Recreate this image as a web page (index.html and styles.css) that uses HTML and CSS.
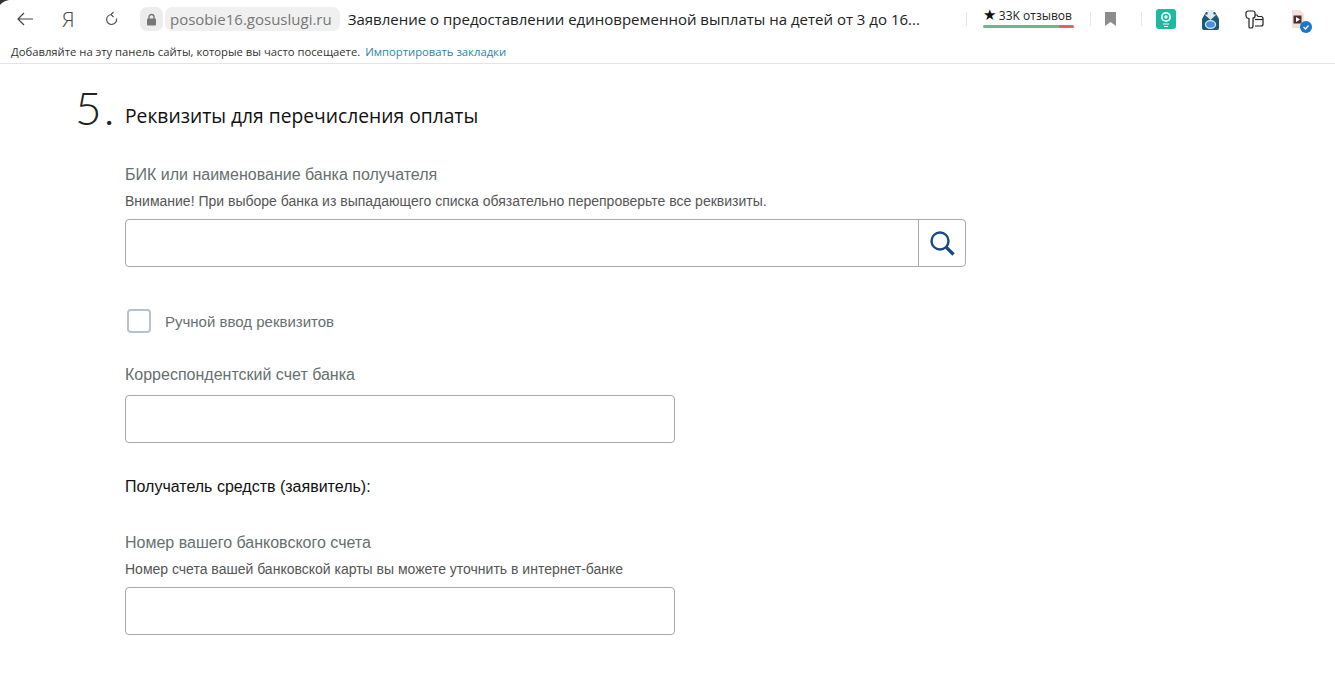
FILE: index.html
```html
<!DOCTYPE html>
<html lang="ru">
<head>
    <meta charset="UTF-8">
    <title>Заявление о предоставлении единовременной выплаты</title>
    <link rel="stylesheet" href="styles.css">
</head>
<body>

    <header class="browser-top">
        <svg class="window-corner" width="9" height="5" viewBox="0 0 9 5"><path d="M0 0h9Q3 1 0 5z" fill="#333"/></svg>
        <div class="toolbar">
            <svg class="btn-back" width="18" height="14" viewBox="0 0 18 14"><path d="M17 7H2M8 1 2 7l6 6" fill="none" stroke="#444" stroke-width="1.2"/></svg>
            <span class="btn-ya">Я</span>
            <svg class="btn-reload" width="14" height="16" viewBox="0 0 14 16"><path d="M8 3.500a5 5 0 1 0 4.500 4M7 3.500 9.500 1M7 3.500 9.500 6" fill="none" stroke="#555" stroke-width="1.2"/></svg>
            <span class="lock-box">
                <svg width="11" height="13" viewBox="0 0 11 13"><path d="M3 6V4a2.500 2.500 0 0 1 5 0v2" fill="none" stroke="#777" stroke-width="1.4"/><rect x="1" y="5.500" width="9" height="7" rx="1" fill="#777"/></svg>
            </span>
            <span class="domain">posobie16.gosuslugi.ru</span>
            <span class="page-title">Заявление о предоставлении единовременной выплаты на детей от 3 до 16...</span>
            <span class="sep sep-first"></span>
            <div class="reviews">
                <span class="reviews-text"><span class="star">★</span> 33K отзывов</span>
                <span class="reviews-bar"></span>
            </div>
            <span class="sep sep-second"></span>
            <svg class="bookmark" width="11" height="14" viewBox="0 0 11 14"><path d="M0 0h11v14L5.500 10 0 14z" fill="#8c8c8c"/></svg>
            <span class="sep sep-third"></span>
            <svg class="ext ext-first" width="20" height="20" viewBox="0 0 20 20"><rect width="20" height="20" rx="3" fill="#1fb8a0"/><circle cx="10" cy="8" r="5" fill="#e8f8f5"/><circle cx="10" cy="8" r="2.500" fill="none" stroke="#1fb8a0" stroke-width="1.500"/><path d="M7 15h6M8 17.500h4" stroke="#e8f8f5" stroke-width="1.200"/></svg>
            <svg class="ext ext-second" width="19" height="21" viewBox="0 0 19 21"><path d="M1 10 5 3h9l4 7v9a2 2 0 0 1-2 2H3a2 2 0 0 1-2-2z" fill="#1d5878"/><path d="M6.500 1h6v4.500h3L9.500 11l-6-5.500h3z" fill="#dfe8ee"/><ellipse cx="9.500" cy="15.500" rx="5" ry="3.800" fill="#4a90d9" stroke="#dfe8ee" stroke-width="1.300"/></svg>
            <svg class="ext ext-third" width="19" height="19" viewBox="0 0 19 19"><path d="M10 5h2l1 1.500h3a2 2 0 0 1 2 2V14a2 2 0 0 1-2 2h-6" fill="#fff" stroke="#222" stroke-width="1.200"/><path d="M10 9.500h8" stroke="#222" stroke-width="1.200"/><path d="M1 3a2 2 0 0 1 2-2h5a2 2 0 0 1 2 2v3a2 2 0 0 1-2 2v8a2 2 0 0 1-2 2H5a1 1 0 0 1-1-1V8.500A3 3 0 0 1 1 6z" fill="#fff" stroke="#222" stroke-width="1.200"/></svg>
            <svg class="ext ext-video" width="22" height="24" viewBox="0 0 22 24"><path d="M1 0h8l4 4v14H1z" fill="#f1e0dc"/><rect x="2.500" y="5.500" width="8" height="8" fill="#4a2f2f"/><path d="m5 7 4 2.500L5 12z" fill="#fff"/><circle cx="15" cy="17" r="6" fill="#1b75c9"/><path d="m12.500 17 2 2 3-3.500" fill="none" stroke="#fff" stroke-width="1.300"/></svg>
        </div>
        <div class="bookmarks-bar">
            <span>Добавляйте на эту панель сайты, которые вы часто посещаете.</span>
            <a href="#">Импортировать закладки</a>
        </div>
    </header>

    <main class="form-section">
        <div class="section-head">
            <span class="step-num">5.</span>
            <h2>Реквизиты для перечисления оплаты</h2>
        </div>

        <div class="field field-bank">
            <label>БИК или наименование банка получателя</label>
            <p class="hint">Внимание! При выборе банка из выпадающего списка обязательно перепроверьте все реквизиты.</p>
            <div class="search-input">
                <input type="text">
                <button type="button">
                    <svg width="26" height="26" viewBox="0 0 26 26"><circle cx="11" cy="11" r="8.500" fill="none" stroke="#174a8c" stroke-width="2.400"/><path d="m17 17 7.500 7.500" stroke="#174a8c" stroke-width="3.200"/></svg>
                </button>
            </div>
        </div>

        <div class="manual-check">
            <span class="checkbox"></span>
            <span>Ручной ввод реквизитов</span>
        </div>

        <div class="field field-corr">
            <label>Корреспондентский счет банка</label>
            <input class="text-input" type="text">
        </div>

        <p class="recipient">Получатель средств (заявитель):</p>

        <div class="field field-account">
            <label>Номер вашего банковского счета</label>
            <p class="hint">Номер счета вашей банковской карты вы можете уточнить в интернет-банке</p>
            <input class="text-input" type="text">
        </div>
    </main>

</body>
</html>
```

FILE: styles.css
```css
/* общие стили */
* {
    box-sizing: border-box;
}

body {
    margin: 0;
    background: #fff;
    color: #333;
    font-family: "Liberation Sans", Arial, sans-serif;
}

/* верхняя панель браузера */
.browser-top {
    position: relative;
    height: 64px;
    border-bottom: 1px solid #e4e4e4;
}

.window-corner {
    position: absolute;
    top: 0;
    left: 0;
}

.toolbar {
    display: flex;
    align-items: center;
    height: 38px;
    padding-left: 16px;
}

.btn-ya {
    margin-left: 28px;
    width: 15px;
    font-family: "Open Sans", sans-serif;
    font-size: 21px;
    font-weight: 300;
    color: #444;
}

.btn-reload {
    margin-left: 27px;
}

.lock-box {
    display: flex;
    align-items: center;
    justify-content: center;
    width: 23px;
    height: 24px;
    margin-left: 22px;
    background: #ececec;
    border-radius: 7px;
}

.domain {
    margin-left: 2px;
    padding: 0 8px 0 5px;
    height: 24px;
    line-height: 24px;
    background: #f0f0f0;
    border-radius: 7px;
    font-family: "Open Sans", sans-serif;
    font-size: 15px;
    color: #777;
    white-space: nowrap;
}

.page-title {
    margin-left: 8px;
    width: 600px;
    font-family: "Open Sans", sans-serif;
    font-size: 15px;
    color: #222;
    white-space: nowrap;
}

.sep {
    width: 1px;
    height: 14px;
    background: #e6e6e6;
}

.sep-first {
    margin-left: 18px;
}

.reviews {
    display: flex;
    flex-direction: column;
    gap: 1px;
    width: 91px;
    margin-left: 16px;
    margin-top: -4px;
}

.reviews-text {
    font-family: "Open Sans", sans-serif;
    font-size: 12px;
    line-height: 16px;
    color: #222;
    white-space: nowrap;
}

.star {
    font-size: 15px;
    line-height: 14px;
    color: #111;
}

.reviews-bar {
    height: 3px;
    border-radius: 2px;
    background: linear-gradient(to right, #6fb48f 84%, #d9695c 84%);
}

.sep-second {
    margin-left: 16px;
}

.bookmark {
    margin-left: 14px;
}

.sep-third {
    margin-left: 25px;
}

.ext-first {
    margin-left: 14px;
}

.ext-second {
    margin-left: 25px;
}

.ext-third {
    margin-left: 25px;
}

.ext-video {
    margin-left: 27px;
    margin-top: 6px;
}

.bookmarks-bar {
    display: flex;
    gap: 5px;
    padding-left: 11px;
    padding-top: 6px;
    font-family: "Open Sans", sans-serif;
    font-size: 11.27px;
    line-height: 16px;
    color: #333;
}

.bookmarks-bar a {
    color: #2a84a8;
    text-decoration: none;
}

/* форма */
.form-section {
    padding-left: 125px;
}

.section-head {
    display: flex;
    align-items: flex-start;
    height: 90px;
    padding-top: 19px;
    margin-left: -50px;
}

.step-num {
    width: 50px;
    font-family: Lato, sans-serif;
    font-size: 46px;
    font-weight: 300;
    letter-spacing: 2px;
    line-height: 50px;
    color: #222;
}

h2 {
    margin: 0;
    padding-top: 22px;
    font-family: "Open Sans", sans-serif;
    font-size: 19.25px;
    line-height: 22px;
    font-weight: 400;
    color: #111;
}

label {
    display: block;
    font-size: 16px;
    line-height: 20px;
    color: #66706f;
}

.hint {
    margin: 7px 0 0;
    font-size: 14px;
    line-height: 18px;
    color: #555;
}

.field-bank {
    margin-top: 11px;
}

.search-input {
    display: flex;
    width: 841px;
    height: 48px;
    margin-top: 9px;
    border: 1px solid #a9a9a9;
    border-radius: 4px;
}

.search-input input {
    flex: 1;
    border: 0;
    background: none;
}

.search-input button {
    display: flex;
    align-items: center;
    justify-content: center;
    width: 47px;
    padding: 0;
    border: 0;
    border-left: 1px solid #a9a9a9;
    background: none;
}

.manual-check {
    display: flex;
    align-items: center;
    gap: 14px;
    margin-top: 42px;
    margin-left: 2px;
    font-size: 15px;
    color: #66706f;
}

.checkbox {
    width: 24px;
    height: 24px;
    border: 2px solid #b5c3cc;
    border-radius: 4px;
}

.field-corr {
    margin-top: 32px;
}

.text-input {
    display: block;
    width: 550px;
    height: 48px;
    border: 1px solid #a9a9a9;
    border-radius: 4px;
    background: none;
}

.field-corr .text-input {
    margin-top: 10px;
}

.recipient {
    margin: 34px 0 0;
    font-size: 16px;
    line-height: 20px;
    color: #111;
}

.field-account {
    margin-top: 36px;
}

.field-account .text-input {
    margin-top: 9px;
}
```
